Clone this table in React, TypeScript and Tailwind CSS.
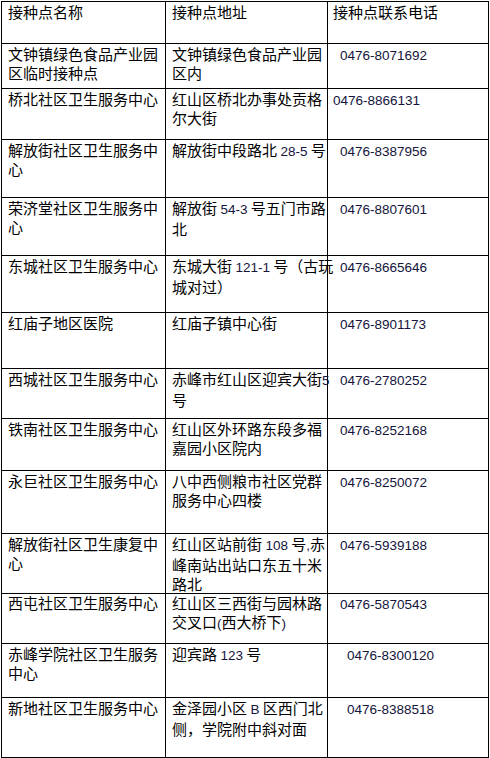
const rows: { h: string; name: string[]; addr: string[][]; phone: string; pad: string }[] = [
  { h: "h-[45px]", name: ["文钟镇绿色食品产业园", "区临时接种点"], addr: [["文钟镇绿色食品产业园"], ["区内"]], phone: "0476-8071692", pad: "pl-[12px]" },
  { h: "h-[51px]", name: ["桥北社区卫生服务中心"], addr: [["红山区桥北办事处贡格"], ["尔大街"]], phone: "0476-8866131", pad: "pl-[5px]" },
  { h: "h-[58px]", name: ["解放街社区卫生服务中", "心"], addr: [["解放街中段路北 ", "28-5", " 号"]], phone: "0476-8387956", pad: "pl-[12px]" },
  { h: "h-[58px]", name: ["荣济堂社区卫生服务中", "心"], addr: [["解放街 ", "54-3", " 号五门市路"], ["北"]], phone: "0476-8807601", pad: "pl-[12px]" },
  { h: "h-[57px]", name: ["东城社区卫生服务中心"], addr: [["东城大街 ", "121-1", " 号（古玩"], ["城对过）"]], phone: "0476-8665646", pad: "pl-[12px]" },
  { h: "h-[56px]", name: ["红庙子地区医院"], addr: [["红庙子镇中心街"]], phone: "0476-8901173", pad: "pl-[12px]" },
  { h: "h-[50px]", name: ["西城社区卫生服务中心"], addr: [["赤峰市红山区迎宾大街", "5"], ["号"]], phone: "0476-2780252", pad: "pl-[12px]" },
  { h: "h-[52px]", name: ["铁南社区卫生服务中心"], addr: [["红山区外环路东段多福"], ["嘉园小区院内"]], phone: "0476-8252168", pad: "pl-[12px]" },
  { h: "h-[63px]", name: ["永巨社区卫生服务中心"], addr: [["八中西侧粮市社区党群"], ["服务中心四楼"]], phone: "0476-8250072", pad: "pl-[12px]" },
  { h: "h-[59px]", name: ["解放街社区卫生康复中", "心"], addr: [["红山区站前街 ", "108", " 号", ",", "赤"], ["峰南站出站口东五十米"], ["路北"]], phone: "0476-5939188", pad: "pl-[12px]" },
  { h: "h-[51px]", name: ["西屯社区卫生服务中心"], addr: [["红山区三西街与园林路"], ["交叉口", "(", "西大桥下", ")"]], phone: "0476-5870543", pad: "pl-[12px]" },
  { h: "h-[54px]", name: ["赤峰学院社区卫生服务", "中心"], addr: [["迎宾路 ", "123", " 号"]], phone: "0476-8300120", pad: "pl-[19px]" },
  { h: "h-[60px]", name: ["新地社区卫生服务中心"], addr: [["金泽园小区 ", "B", " 区西门北"], ["侧，学院附中斜对面"]], phone: "0476-8388518", pad: "pl-[19px]" },
];

const cjk = "font-['Noto_Sans_CJK_SC',sans-serif]";
const latin = "font-['Liberation_Sans','Noto_Sans_CJK_SC',sans-serif] text-[13.5px] text-[#14143c]";

function Part({ text }: { text: string }) {
  if (/^[0-9A-Za-z\-,()]+$/.test(text)) {
    return <span className={latin}>{text}</span>;
  }
  return <span>{text}</span>;
}

export default function App() {
  return (
    <div className={`bg-white w-[490px] h-[758px] pt-px pl-px ${cjk} text-[15px] leading-[19px] text-black`}>
      <div className="w-[488px] border-l border-t border-black">
        <div className="grid grid-cols-[164px_162px_161px] h-[42px]">
          <div className="border-r border-b border-black pl-[6px]">接种点名称</div>
          <div className="border-r border-b border-black pl-[6px]">接种点地址</div>
          <div className="border-r border-b border-black pl-[5px]">接种点联系电话</div>
        </div>
        {rows.map((r) => (
          <div key={r.phone} className={`grid grid-cols-[164px_162px_161px] ${r.h}`}>
            <div className="border-r border-b border-black pl-[6px]">
              {r.name.map((l) => (
                <div key={l} className="whitespace-nowrap">{l}</div>
              ))}
            </div>
            <div className="border-r border-b border-black pl-[6px]">
              {r.addr.map((l, i) => (
                <div key={i} className="whitespace-pre">
                  {l.map((p, j) => (
                    <Part key={j} text={p} />
                  ))}
                </div>
              ))}
            </div>
            <div className={`border-r border-b border-black ${r.pad}`}>
              <span className={latin}>{r.phone}</span>
            </div>
          </div>
        ))}
      </div>
    </div>
  );
}
